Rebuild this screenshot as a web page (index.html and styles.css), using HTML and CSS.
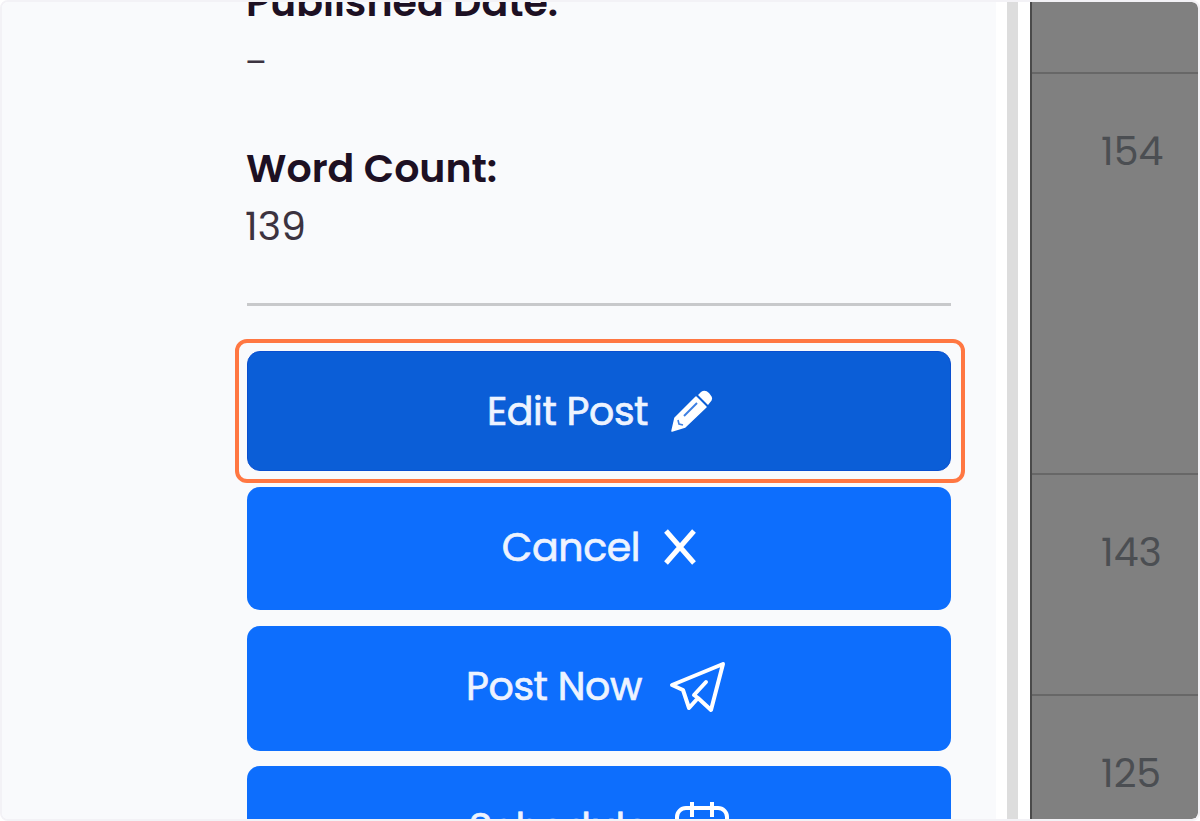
FILE: index.html
```
<!DOCTYPE html>
<html lang="en">
  <head>
    <meta charset="UTF-8">
    <title>Post details</title>
    <link rel="stylesheet" href="styles.css">
  </head>
  <body>
    <div class="frame">
      <div class="panel">
        <div class="details">
          <div class="item item-date">
            <h3>Published Date:</h3>
            <p>–</p>
          </div>
          <div class="item item-count">
            <h3>Word Count:</h3>
            <p>139</p>
          </div>
        </div>
        <hr>
        <div class="actions">
          <button class="btn btn-edit">
            <span>Edit Post</span>
            <svg width="42" height="42" viewBox="0 0 42 42">
              <path d="M1 41L4 28L25 7L35 17L14 37Z" fill="#fff" stroke="#fff" stroke-width="1.5" stroke-linejoin="round"/>
              <path d="M27 5L30 2Q34-1 38 3L39.500 5Q43 9 39 12.500L37 15Z" fill="#fff"/>
              <path d="M13 26L26 13" stroke="#3d7fe2" stroke-width="2"/>
              <path d="M7 30L8 34L12 35" fill="none" stroke="#3d7fe2" stroke-width="1.600"/>
            </svg>
          </button>
          <button class="btn btn-cancel">
            <span>Cancel</span>
            <svg width="32" height="36" viewBox="0 0 32 36">
              <path d="M2 2L30 34M30 2L2 34" fill="none" stroke="#fff" stroke-width="5"/>
            </svg>
          </button>
          <button class="btn btn-post">
            <span>Post Now</span>
            <svg width="58" height="52" viewBox="0 0 58 52">
              <path d="M54 3L3 24L14 29L20 47L29 37L42 49ZM37 21L25 34L29 37" fill="none" stroke="#fff" stroke-width="4" stroke-linejoin="round" stroke-linecap="round"/>
            </svg>
          </button>
          <button class="btn btn-schedule">
            <span>Schedule</span>
            <svg width="54" height="56" viewBox="0 0 54 56">
              <rect x="2" y="6" width="50" height="48" rx="9" fill="none" stroke="#fff" stroke-width="4"/>
              <path d="M17 0V15M37 0V15" stroke="#fff" stroke-width="4"/>
            </svg>
          </button>
        </div>
        <div class="highlight"></div>
      </div>
      <div class="scrollbar"></div>
      <div class="table">
        <div class="cell"></div>
        <div class="cell">154</div>
        <div class="cell">143</div>
        <div class="cell">125</div>
      </div>
    </div>
  </body>
</html>
```
FILE: styles.css
```
* {
  box-sizing: border-box;
}

body {
  margin: 0;
  background: #fff;
  font-family: Poppins, Inter, sans-serif;
  font-size: 39.5px;
}

.frame {
  display: flex;
  width: 1200px;
  height: 821px;
  border: 2px solid #f3f2f6;
  border-radius: 8px;
  overflow: hidden;
  background: #fff;
}

.panel {
  position: relative;
  width: 994px;
  padding: 0 45px 0 245px;
  background: #f9fafc;
}

.details {
  display: flow-root;
  height: 301px;
}

.item {
  height: 166px;
}

.item-date {
  margin-top: -28px;
}

.item h3 {
  margin: 0 0 0 -1px;
  font-size: inherit;
  font-weight: 600;
  line-height: 58px;
  color: #1d1023;
  white-space: nowrap;
}

.item p {
  margin: 0 0 0 -2px;
  line-height: 58px;
  color: #3c3340;
}

.item-date p {
  font-size: 32px;
  line-height: 62px;
}

hr {
  width: 704px;
  height: 3px;
  margin: 0 0 45px;
  border: 0;
  background: #c8c9cb;
}

.actions {
  width: 704px;
}

.btn {
  display: flex;
  align-items: center;
  justify-content: center;
  width: 100%;
  height: 123px;
  padding: 0;
  border: 0;
  border-radius: 13px;
  margin-bottom: 16px;
  background: #0d6efd;
  color: #edf3ff;
  font: inherit;
  letter-spacing: -0.4px;
  -webkit-text-stroke: 0.7px #edf3ff;
  white-space: nowrap;
}

.btn svg {
  flex: none;
}

.btn-edit {
  height: 120px;
  gap: 23px;
  padding-left: 2px;
  background: #0b5ed7;
  border: 1px solid #0a4fd0;
}

.btn-cancel {
  gap: 24px;
  padding-bottom: 3px;
}

.btn-post {
  height: 125px;
  margin-bottom: 15px;
  gap: 27px;
  padding: 0 5px 4px 0;
}

.btn-schedule {
  gap: 26px;
}

.btn-schedule svg {
  margin-top: 4px;
}

/* step marker around the edit button */
.highlight {
  position: absolute;
  top: 337px;
  left: 233px;
  width: 730px;
  height: 144px;
  border: 4px solid #ff7742;
  border-radius: 12px;
}

.scrollbar {
  width: 34px;
  border: solid #fff;
  border-width: 0 12px 0 11px;
  background: #ddd;
}

.table {
  flex: 1;
  border-left: 2px solid #4a4a4a;
  border-radius: 0 6px 6px 0;
  background: #808080;
}

.cell {
  height: 221px;
  padding: 49px 0 0 69px;
  border-bottom: 2px solid #676767;
  line-height: 58px;
  color: #4b4e52;
}

.cell:nth-child(1) {
  height: 72px;
}

.cell:nth-child(2) {
  height: 401px;
}

.cell:last-child {
  border: 0;
  height: 123px;
}
```
